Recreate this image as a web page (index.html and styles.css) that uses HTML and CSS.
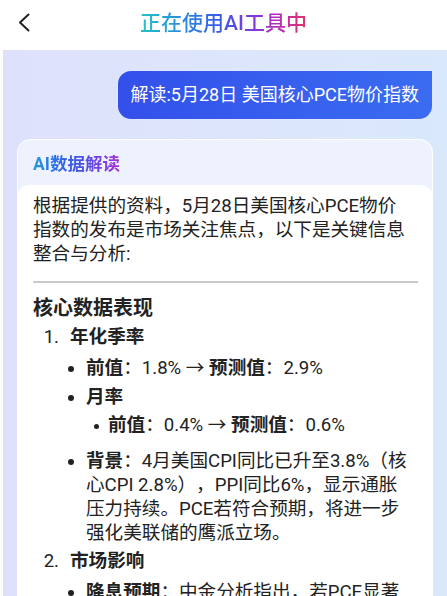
FILE: index.html
```html
<!DOCTYPE html>
<html lang="zh-CN">
<head>
    <meta charset="UTF-8">
    <meta name="viewport" content="width=device-width, initial-scale=1.0">
    <title>正在使用AI工具中</title>
    <link rel="stylesheet" href="styles.css">
</head>
<body>
    <header class="topbar">
        <a class="back" href="#">
            <svg width="12" height="19" viewBox="0 0 12 19">
                <path d="M10.5 1.5 L2 9.5 L10.5 17.5" fill="none" stroke="#222" stroke-width="2" stroke-linecap="round" stroke-linejoin="round"/>
            </svg>
        </a>
        <h1 class="title">正在使用AI工具中</h1>
        <span></span>
    </header>

    <main class="chat">
        <div class="msg-row">
            <div class="bubble">解读:5月28日 美国核心PCE物价指数</div>
        </div>

        <section class="card">
            <h2 class="card-title">AI数据解读</h2>
            <div class="card-body">
                <p>根据提供的资料，5月28日美国核心PCE物价指数的发布是市场关注焦点，以下是关键信息整合与分析:</p>
                <hr>
                <h3>核心数据表现</h3>
                <ol class="points">
                    <li><strong>年化季率</strong>
                        <ul>
                            <li><strong>前值</strong>：1.8% → <strong>预测值</strong>：2.9%</li>
                            <li><strong>月率</strong>
                                <ul>
                                    <li><strong>前值</strong>：0.4% → <strong>预测值</strong>：0.6%</li>
                                </ul>
                            </li>
                            <li><strong>背景</strong>：4月美国CPI同比已升至3.8%（核心CPI 2.8%），PPI同比6%，显示通胀压力持续。PCE若符合预期，将进一步强化美联储的鹰派立场。</li>
                        </ul>
                    </li>
                    <li><strong>市场影响</strong>
                        <ul>
                            <li><strong>降息预期</strong>：中金分析指出，若PCE显著超预期，美联储年内降息时点或将进一步推迟。</li>
                        </ul>
                    </li>
                </ol>
            </div>
        </section>
    </main>
</body>
</html>
```

FILE: styles.css
```css
* {
    box-sizing: border-box;
}

body {
    margin: 0;
    background: #fff;
    color: #222;
    font-family: Roboto, "Noto Sans CJK SC", sans-serif;
    text-spacing-trim: space-all;
}

/* top bar */
.topbar {
    height: 50px;
    display: grid;
    grid-template-columns: 40px 1fr 40px;
    align-items: center;
    padding: 0 18px;
}
.back {
    display: flex;
    align-items: center;
    height: 20px;
    margin-top: -5px;
}
.title {
    justify-self: center;
    margin: 0;
    margin-top: -5px;
    font-size: 21px;
    font-weight: 500;
    line-height: 28px;
    background: linear-gradient(90deg, #25c2c6 0%, #2a86e2 28%, #3a5ae6 48%, #8a34dc 70%, #c12fa8 86%, #e03463 100%);
    -webkit-background-clip: text;
    background-clip: text;
    color: transparent;
}

/* chat area */
.chat {
    margin-left: 3px;
    min-height: 546px;
    padding: 20px 14px 0 14px;
    background: linear-gradient(90deg, #dfe1fc 0%, #dce6fb 60%, #dae8fb 100%);
}
.msg-row {
    display: flex;
    justify-content: flex-end;
}
.bubble {
    padding: 12px 13px;
    font-size: 18px;
    line-height: 24px;
    color: #fff;
    background: linear-gradient(90deg, #3350ea, #3a6cf1);
    border: 1px solid rgba(255, 255, 255, 0.85);
    border-radius: 14px 0 14px 14px;
}

/* answer card */
.card {
    margin-top: 19px;
    background: linear-gradient(180deg, #eef1fe, #eef4fd);
    border: 1px solid rgba(255, 255, 255, 0.9);
    border-bottom: none;
    border-radius: 14px 14px 0 0;
}
.card-title {
    display: inline-block;
    margin: 0;
    padding: 13px 15px 10px;
    font-size: 17.5px;
    line-height: 22px;
    font-weight: 700;
    background: linear-gradient(90deg, #1fb4d2 0%, #2f6ae8 35%, #4a50e4 55%, #8f36de 78%, #c42cb8 100%);
    -webkit-background-clip: text;
    background-clip: text;
    color: transparent;
}
.card-body {
    margin: 0 -1px;
    background: #fff;
    border-radius: 12px 12px 0 0;
    padding: 9px 21px 0 16px;
    font-size: 18.6px;
    line-height: 24px;
}
.card-body p {
    margin: 0;
}
.card-body hr {
    height: 2px;
    margin: 15px -6px 11px 0;
    border: none;
    background: #cacaca;
}
.card-body h3 {
    margin: 0 0 3px;
    font-size: 20px;
    line-height: 28px;
    font-weight: 700;
}
.card-body strong {
    font-weight: 700;
}

/* numbered points */
.points {
    list-style: none;
    margin: 0;
    padding-left: 37px;
    counter-reset: point;
}
.points > li {
    counter-increment: point;
}
.points > li + li {
    margin-top: 4px;
}
.points > li::before {
    content: counter(point) ".";
    display: inline-block;
    width: 26px;
    margin-left: -37px;
    padding-right: 11px;
    text-align: right;
}
.points ul {
    list-style: none;
    margin: 7px 0 0;
    padding-left: 16px;
}
.points ul > li + li {
    margin-top: 5px;
}
.points ul > li::before {
    content: "";
    display: inline-block;
    width: 6px;
    height: 6px;
    margin-left: -18px;
    margin-right: 12px;
    border-radius: 50%;
    background: #222;
    vertical-align: middle;
}
.points ul ul {
    margin: 4px 0 12px;
    padding-left: 22px;
}
.points ul ul > li::before {
    width: 5px;
    height: 5px;
    margin-left: -14px;
    margin-right: 9px;
}
```
